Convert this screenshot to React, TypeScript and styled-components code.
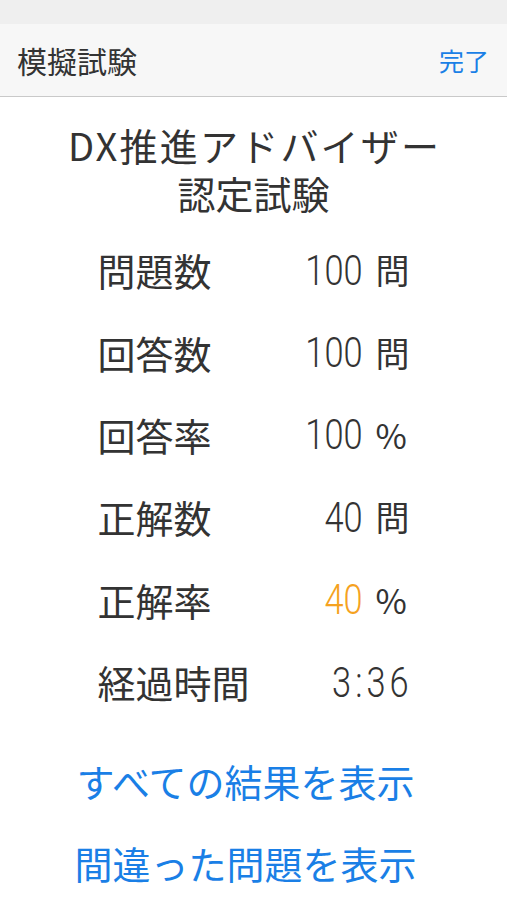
import React from "react";
import styled, { createGlobalStyle } from "styled-components";

const GlobalStyle = createGlobalStyle`
  html, body {
    margin: 0;
    padding: 0;
    background: #ffffff;
  }
  body {
    font-family: "Noto Sans CJK JP", "Noto Sans", sans-serif;
    color: #333333;
  }
`;

const Screen = styled.div`
  width: 507px;
  min-height: 900px;
  background: #ffffff;
  display: flex;
  flex-direction: column;
`;

const StatusBar = styled.div`
  height: 24px;
  background: #efefef;
`;

const NavBar = styled.div`
  height: 72px;
  background: #f7f7f7;
  border-bottom: 1px solid #c9c9c9;
  display: flex;
  align-items: center;
  justify-content: space-between;
  padding: 0 18px 0 17px;
`;

const NavTitle = styled.div`
  font-size: 30px;
  color: #333333;
  line-height: 1;
`;

const NavButton = styled.div`
  font-size: 25px;
  color: #1a7fe6;
  line-height: 1;
`;

const Heading = styled.h1`
  margin: 24px 0 0;
  font-weight: 400;
  font-size: 38px;
  line-height: 48px;
  text-align: center;
  color: #333333;
  display: flex;
  flex-direction: column;
  align-items: center;
`;

const HeadingLine = styled.span<{ $wide?: boolean }>`
  display: block;
  height: 48px;
  letter-spacing: ${(p) => (p.$wide ? "2.2px" : "0")};
  margin-right: ${(p) => (p.$wide ? "-2.2px" : "0")};
`;

const Stats = styled.div`
  margin: 12px auto 0;
  width: 312px;
  display: grid;
  grid-template-columns: 1fr auto auto;
  grid-auto-rows: 82.4px;
  align-items: center;
`;

const Label = styled.div`
  font-size: 38px;
  line-height: 1;
  color: #333333;
`;

const Num = styled.div<{ $accent?: boolean; $span?: boolean }>`
  font-family: "Roboto", "Noto Sans", sans-serif;
  font-weight: 300;
  font-size: 43px;
  line-height: 1;
  text-align: right;
  justify-self: end;
  transform: scaleX(0.8);
  transform-origin: right center;
  color: ${(p) => (p.$accent ? "#f5a21f" : "#333333")};
  grid-column: ${(p) => (p.$span ? "2 / 4" : "auto")};
  letter-spacing: ${(p) => (p.$span ? "5px" : "0")};
  margin-right: ${(p) => (p.$span ? "-3px" : "0")};
`;

const Unit = styled.div`
  font-size: 34px;
  line-height: 1;
  margin-left: 13px;
  color: #333333;
`;

const Links = styled.div`
  margin-top: 16px;
  display: flex;
  flex-direction: column;
  align-items: center;
  padding-right: 16px;
`;

const LinkButton = styled.div`
  height: 82px;
  display: flex;
  align-items: center;
  font-size: 38px;
  color: #1a7fe6;
`;

type Row = { label: string; num: string; unit?: string; accent?: boolean };

const rows: Row[] = [
  { label: "問題数", num: "100", unit: "問" },
  { label: "回答数", num: "100", unit: "問" },
  { label: "回答率", num: "100", unit: "%" },
  { label: "正解数", num: "40", unit: "問" },
  { label: "正解率", num: "40", unit: "%", accent: true },
  { label: "経過時間", num: "3:36" },
];

export default function App() {
  return (
    <>
      <GlobalStyle />
      <Screen>
        <StatusBar />
        <NavBar>
          <NavTitle>模擬試験</NavTitle>
          <NavButton>完了</NavButton>
        </NavBar>
        <Heading>
          <HeadingLine $wide>DX推進アドバイザー</HeadingLine>
          <HeadingLine>認定試験</HeadingLine>
        </Heading>
        <Stats>
          {rows.map((r) => (
            <React.Fragment key={r.label}>
              <Label>{r.label}</Label>
              <Num $accent={r.accent} $span={!r.unit}>
                {r.num}
              </Num>
              {r.unit && <Unit>{r.unit}</Unit>}
            </React.Fragment>
          ))}
        </Stats>
        <Links>
          <LinkButton>すべての結果を表示</LinkButton>
          <LinkButton>間違った問題を表示</LinkButton>
        </Links>
      </Screen>
    </>
  );
}
